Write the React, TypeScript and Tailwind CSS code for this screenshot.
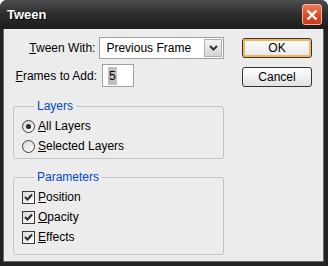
const font = { fontFamily: '"Liberation Sans", Arial, sans-serif' };

function Check() {
  return (
    <span className="w-[13px] h-[13px] border border-[#3c3c3c] bg-gradient-to-br from-[#d8d8d8] to-[#ffffff] flex items-center justify-center">
      <svg width="9" height="9" viewBox="0 0 9 9">
        <path d="M1 4 L3.5 6.5 L8 1.5" stroke="#2a2a2a" strokeWidth="2" fill="none" />
      </svg>
    </span>
  );
}

function Radio({ on }: { on?: boolean }) {
  return (
    <span className="w-[13px] h-[13px] rounded-full border border-[#3c3c3c] bg-gradient-to-br from-[#d8d8d8] to-[#ffffff] flex items-center justify-center">
      {on && <span className="w-[5px] h-[5px] rounded-full bg-[#2a2a2a]" />}
    </span>
  );
}

export default function App() {
  return (
    <div className="w-[328px] h-[266px] bg-[#222] rounded-t-[7px] flex flex-col overflow-hidden text-[12px] text-black" style={font}>
      {/* title bar */}
      <div className="h-[29px] shrink-0 flex items-center justify-between pl-[7px] pr-[6px] bg-gradient-to-b from-[#4e4e4e] via-[#2c2c2c] to-[#1c1c1c]">
        <span className="text-white font-bold text-[13px] [text-shadow:1px_1px_0_#000]">Tween</span>
        <button className="w-[20px] h-[21px] rounded-[3px] border border-[#f0b8a4] bg-gradient-to-b from-[#ee7a58] via-[#dc4d28] to-[#c43c18] flex items-center justify-center">
          <svg width="12" height="12" viewBox="0 0 12 12">
            <path d="M1.5 1.5 L10.5 10.5 M10.5 1.5 L1.5 10.5" stroke="#fff" strokeWidth="2.4" />
          </svg>
        </button>
      </div>

      {/* body */}
      <div className="flex-1 ml-[3px] mr-[4px] mb-[4px] border-x border-b border-[#6a6a6a] bg-[#ececec] flex pl-[9px] pt-[8px]">
        <div className="w-[211px] flex flex-col">
          <div className="flex items-center h-[22px]">
            <span className="w-[84px] text-right">
              <u>T</u>ween With:
            </span>
            <div className="ml-[4px] w-[127px] h-[22px] bg-white border border-[#a0a0a0] flex items-center justify-between pr-[1px]">
              <span className="pl-[6px]">Previous Frame</span>
              <span className="w-[18px] h-[18px] border border-[#b0b0b0] bg-gradient-to-b from-[#f4f4f4] to-[#d4d4d4] flex items-center justify-center">
                <svg width="9" height="6" viewBox="0 0 9 6">
                  <path d="M1 1 L4.5 4.5 L8 1" stroke="#333" strokeWidth="2" fill="none" />
                </svg>
              </span>
            </div>
          </div>

          <div className="flex items-center h-[23px] mt-[5px]">
            <span className="w-[84px] text-right">
              <u>F</u>rames to Add:
            </span>
            <div className="ml-[5px] w-[32px] h-[23px] bg-white border border-[#a0a0a0] flex items-center pl-[5px]">
              <span className="bg-[#c0c0c0] px-[1px]">5</span>
            </div>
          </div>

          <fieldset className="mt-[12px] border border-[#c4c4c4] rounded-[3px] pl-[8px] pb-[2px] pt-[3px]">
            <legend className="ml-[12px] px-[3px] text-[#0046d5] leading-[14px]">Layers</legend>
            <label className="flex items-center h-[20px] gap-[3px]">
              <Radio on />
              <span>
                <u>A</u>ll Layers
              </span>
            </label>
            <label className="flex items-center h-[20px] gap-[3px]">
              <Radio />
              <span>
                <u>S</u>elected Layers
              </span>
            </label>
          </fieldset>

          <fieldset className="mt-[11px] border border-[#c4c4c4] rounded-[3px] pl-[8px] pb-[7px] pt-[3px]">
            <legend className="ml-[12px] px-[3px] text-[#0046d5] leading-[14px]">Parameters</legend>
            {["Position", "Opacity", "Effects"].map((t) => (
              <label key={t} className="flex items-center h-[20px] gap-[3px]">
                <Check />
                <span>
                  <u>{t[0]}</u>
                  {t.slice(1)}
                </span>
              </label>
            ))}
          </fieldset>
        </div>

        <div className="ml-[18px] flex flex-col gap-[9px] pt-[1px]">
          <button className="w-[70px] h-[20px] rounded-[3px] border border-[#333] bg-gradient-to-b from-[#fff] to-[#e6e6e6] shadow-[inset_0_0_0_2px_#f3b65a]">
            OK
          </button>
          <button className="w-[70px] h-[20px] rounded-[3px] border border-[#333] bg-gradient-to-b from-[#fff] to-[#e2e2e2]">
            Cancel
          </button>
        </div>
      </div>
    </div>
  );
}
